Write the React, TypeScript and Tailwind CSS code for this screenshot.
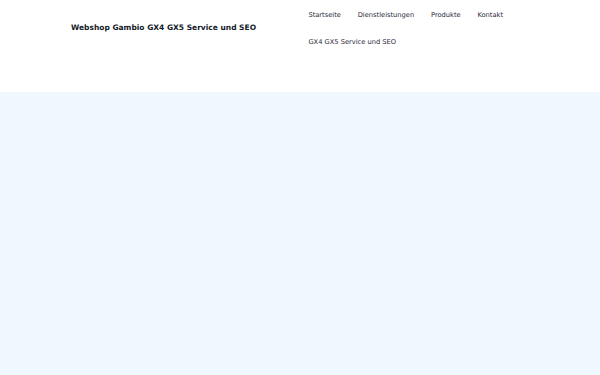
export default function App() {
  const items = ["Startseite", "Dienstleistungen", "Produkte", "Kontakt", "GX4 GX5 Service und SEO"];
  return (
    <div className="min-h-[375px] bg-[#f0f8ff]" style={{ fontFamily: '"DejaVu Sans", sans-serif' }}>
      <header className="flex h-[92px] items-start bg-white pl-[71px]">
        <div className="w-[229px] pt-[22px]">
          <span className="block text-[7.5px] font-bold leading-[12px] text-[#111827]">Webshop Gambio GX4 GX5 Service und SEO</span>
        </div>
        <nav className="flex w-[232px] flex-wrap pt-[2px]">
          {items.map((t) => (
            <a key={t} className="flex h-[27px] items-center px-[8.4px] text-[6.7px] text-[#1f2937]">
              {t}
            </a>
          ))}
        </nav>
      </header>
    </div>
  );
}
